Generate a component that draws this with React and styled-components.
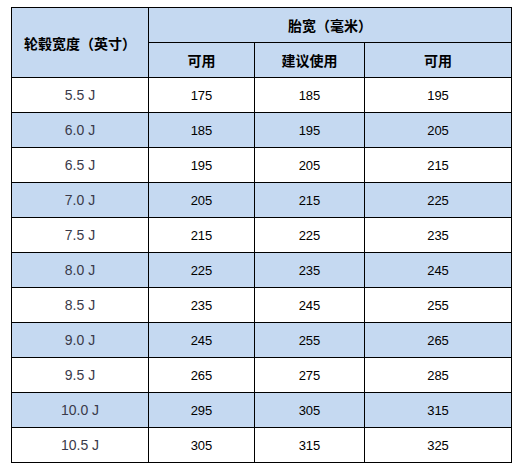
import React from "react";
import styled, { createGlobalStyle } from "styled-components";

const rows = [
  ["5.5 J", 175, 185, 195],
  ["6.0 J", 185, 195, 205],
  ["6.5 J", 195, 205, 215],
  ["7.0 J", 205, 215, 225],
  ["7.5 J", 215, 225, 235],
  ["8.0 J", 225, 235, 245],
  ["8.5 J", 235, 245, 255],
  ["9.0 J", 245, 255, 265],
  ["9.5 J", 265, 275, 285],
  ["10.0 J", 295, 305, 315],
  ["10.5 J", 305, 315, 325],
];

const GlobalStyle = createGlobalStyle`
  body {
    margin: 0;
    background: #ffffff;
    font-family: "Liberation Sans", Arial, sans-serif;
  }
`;

const Page = styled.div`
  padding: 7px 0 0 11px;
`;

const Table = styled.table`
  border-collapse: collapse;
  table-layout: fixed;
  width: 500px;
  border: 1px solid #000;
`;

const Col = styled.col`
  width: ${(p) => p.$w}px;
`;

const Head = styled.th`
  height: 34px;
  padding: 0;
  background: #c5d9f1;
  border: 1px solid #000;
  font-family: "Noto Sans CJK SC", "Liberation Sans", sans-serif;
  font-size: 14px;
  font-weight: 700;
  color: #000;
  text-align: center;
  vertical-align: middle;
`;

const Row = styled.tr`
  background: ${(p) => (p.$shaded ? "#c5d9f1" : "#ffffff")};
`;

const Cell = styled.td`
  height: 34px;
  padding: 0;
  border: 1px solid #000;
  text-align: center;
  vertical-align: middle;
  font-size: ${(p) => (p.$label ? "14px" : "13px")};
  color: ${(p) => (p.$label ? "#3a3a4a" : "#000")};
`;

export default function App() {
  return (
    <Page>
      <GlobalStyle />
      <Table>
        <colgroup>
          <Col $w={137} />
          <Col $w={106} />
          <Col $w={110} />
          <Col $w={147} />
        </colgroup>
        <thead>
          <tr>
            <Head rowSpan={2}>轮毂宽度（英寸）</Head>
            <Head colSpan={3}>胎宽（毫米）</Head>
          </tr>
          <tr>
            <Head>可用</Head>
            <Head>建议使用</Head>
            <Head>可用</Head>
          </tr>
        </thead>
        <tbody>
          {rows.map((r, i) => (
            <Row key={r[0]} $shaded={i % 2 === 1}>
              <Cell $label>{r[0]}</Cell>
              <Cell>{r[1]}</Cell>
              <Cell>{r[2]}</Cell>
              <Cell>{r[3]}</Cell>
            </Row>
          ))}
        </tbody>
      </Table>
    </Page>
  );
}
